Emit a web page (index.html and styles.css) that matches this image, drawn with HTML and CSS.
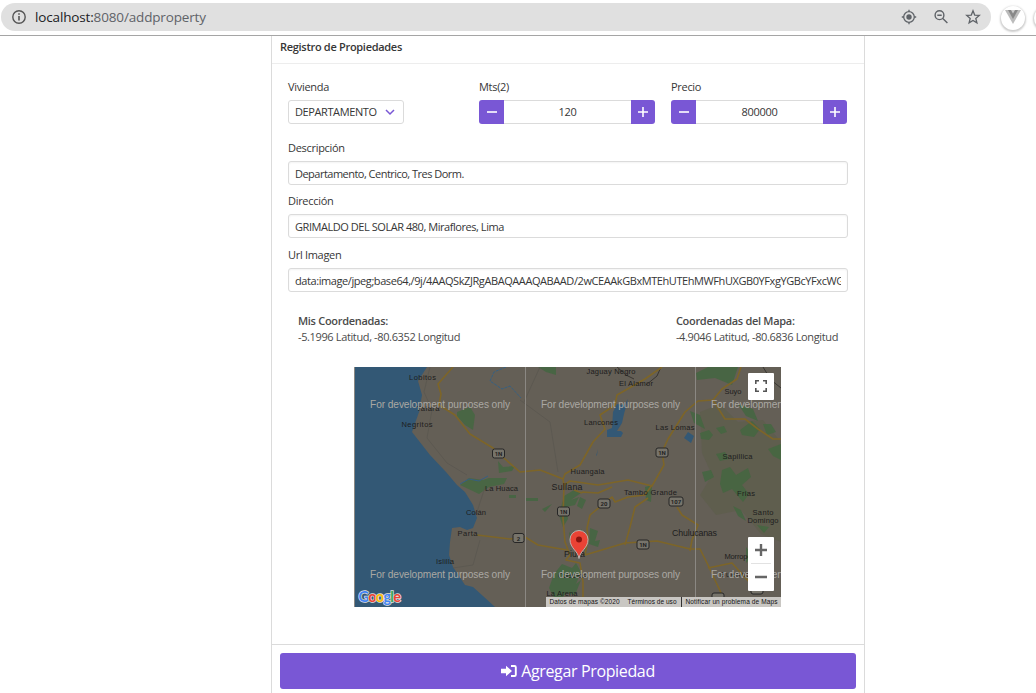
FILE: index.html
```
<!DOCTYPE html>
<html lang="es">
<head>
<meta charset="utf-8">
<title>Registro de Propiedades</title>
<link rel="stylesheet" href="styles.css">
</head>
<body>
<header class="browser">
  <div class="omnibox">
    <svg class="info" width="16" height="16" viewBox="0 0 16 16"><circle cx="8" cy="8" r="6.2" fill="none" stroke="#555" stroke-width="1.4"/><path d="M8 7v4.4M8 4.2v1.6" stroke="#555" stroke-width="1.6"/></svg>
    <span class="url"><b>localhost:</b>8080/addproperty</span>
    <div class="tools">
      <svg width="16" height="16" viewBox="0 0 16 16" fill="none" stroke="#5f6368" stroke-width="1.3"><circle cx="8" cy="8" r="5.3"/><circle cx="8" cy="8" r="2.7" fill="#5f6368" stroke="none"/><path d="M8 .8v2M8 13.2v2M.8 8h2M13.2 8h2"/></svg>
      <svg width="16" height="16" viewBox="0 0 16 16" fill="none" stroke="#5f6368" stroke-width="1.4"><circle cx="6.5" cy="6.2" r="4.4"/><path d="M9.8 9.5l4.6 4.6M4.3 6.2h4.4"/></svg>
      <svg width="16" height="16" viewBox="0 0 16 16" fill="none" stroke="#5f6368" stroke-width="1.3"><path d="M8 1.8l1.7 4.3 4.6.3-3.5 3 1.1 4.5L8 11.4l-3.9 2.5 1.1-4.5-3.5-3 4.6-.3z"/></svg>
    </div>
  </div>
  <div class="ext"><svg width="16" height="14" viewBox="0 0 16 14"><path d="M0 0h16L8 14z" fill="#bbb"/><path d="M3 0h10L8 9z" fill="#888"/><path d="M6 0h4L8 3.4z" fill="#ccc"/></svg></div>
  <div class="ext next"></div>
</header>
<main class="card">
  <h1 class="card-title"><span>Registro de Propiedades</span></h1>
  <div class="content">
    <div class="row">
      <div class="col"><label>Vivienda</label>
        <div class="select"><span>DEPARTAMENTO</span><svg width="10" height="7" viewBox="0 0 10 7"><path d="M1 1l4 4 4-4" fill="none" stroke="#7957d5" stroke-width="1.5"/></svg></div></div>
      <div class="col"><label class="mts">Mts(2)</label>
        <div class="number"><i class="btn"><svg width="12" height="12"><path d="M1 6h10" stroke="#fff" stroke-width="1.6"/></svg></i><span class="value">120</span><i class="btn plus"><svg width="12" height="12"><path d="M1 6h10M6 1v10" stroke="#fff" stroke-width="1.6"/></svg></i></div></div>
      <div class="col"><label>Precio</label>
        <div class="number"><i class="btn"><svg width="12" height="12"><path d="M1 6h10" stroke="#fff" stroke-width="1.6"/></svg></i><span class="value">800000</span><i class="btn plus"><svg width="12" height="12"><path d="M1 6h10M6 1v10" stroke="#fff" stroke-width="1.6"/></svg></i></div></div>
    </div>
    <div class="field desc"><label>Descripción</label><div class="input"><span class="text">Departamento, Centrico, Tres Dorm.</span></div></div>
    <div class="field"><label>Dirección</label><div class="input"><span class="addr">GRIMALDO DEL SOLAR 480, Miraflores, Lima</span></div></div>
    <div class="field"><label>Url Imagen</label><div class="input"><span class="long">data:image/jpeg;base64,/9j/4AAQSkZJRgABAQAAAQABAAD/2wCEAAkGBxMTEhUTEhMWFhUXGB0YFxgYGBcYFxcWGBcY</span></div></div>
    <div class="coords">
      <div><b>Mis Coordenadas:</b><span>-5.1996 Latitud, -80.6352 Longitud</span></div>
      <div><b>Coordenadas del Mapa:</b><span>-4.9046 Latitud, -80.6836 Longitud</span></div>
    </div>
    <div class="map">
      <svg class="tiles" width="427" height="240" viewBox="354 367 427 240">
        <rect x="354" y="367" width="427" height="240" fill="#645f56"/>
        <path class="hills" d="M700 412l20-8 18 18 25-2 18 22v100l-20-8-20-24-25 5-16-20 12-20-10-22z"/>
        <path class="water" d="M354 367h73l-9 14 4 14-3 17-7 20 18 23 16 17 11 13 8 7 8 13 4 13-4 10-6 2-7-3-8 1-2 14-1 13 4 12 12 18 8 2 10 9 12 11H354zM613 412l4-8 7 1 4-6-4 15-2 9-5 8h4l2 2-2 4h-14v-7l5-2zM688 432l6 4-3 7-7-5zM598 449l-2 7 1-1z"/>
        <g class="green">
          <path d="M457 412l13-5 5 8-2 15-8-5-8-9zM498 461l5 6 12-1-3 5-13 2zM460 485l9-7 14 2 6-2 18 0-3 6-15 3-10 7zM538 367h18v8l-10-3zM509 495h7v3h-7zM526 498h12v3h-12zM542 509l10-5-7 8zM696 373l12-6h30l-6 18-17-7-18 2zM690 411l10 4 5 14-11-6zM700 433l9-3 4 5-4 5-8-1zM716 428l8-2 3 6-6 2zM740 430l12-9 8 8-6 8-12-2zM763 424l8 0 5 8-9 3zM738 404l15 5 5 12-12-5zM768 449l13-5v16l-8-4zM702 472l9-2 3 7-9 5zM722 470l8-3 6 8 12-7 3 9-9 8 7 9-6 8-11-13-9 4-3-9zM716 454l9-2 4 7-9 2zM733 506l8 4 5 11-8-5zM757 525l12 2-5 6zM746 547l7 9-7 7z"/>
          <path d="M564 496l10-6 7 3-10 7 8-3-4 8-9 2 2 12-5 8-4-12zM590 528l8 3-3 10 5-1-2 7-9-3zM581 529l6 7-1 18-4-9zM569 532l4 4-3 5zM549 588l5-14 8-10 10 4 4-5 5 9-5 12 5-4-6 15-8-2-10 9-5-8zM645 487l7-2-1 17-5-2zM580 497l6 3-4 9-5-3z"/>
        </g>
        <path class="minor" d="M430 367l-6 25 8 18-5 28 20 25 20 12M520 400l30 22 8 50M480 540l-7 25-20 3M485 487l-8 25M540 367l-16 35"/>
        <path class="rail" d="M661 367l-4 9-11 9M616 366l10 9 8 4M781 388l-10-8-8-13"/>
        <path class="river" stroke-dasharray="3 1" d="M506 367l-12 5-4 9 12 8 8-3 11 12"/>
        <path class="river" d="M460 484l9-5 10 2 9-5"/>
        <g class="road">
          <path d="M453 367l-15 17 3 10-2 11 16 10 15 19 23 14 12 11 15 13 20-2 13 5 10 4 2-5 15-9 13-23 12-13-5-14 15-10 2-10 28-16 17-12M563 479l1 6 6-4 28 4 30-5 24 6 12-21-2-13 6-13 17-27 13-11 15-1 9-11 15-10 4-12M713 400l12 19h20l13 10 15 10h8"/>
          <path d="M564 485l-1 33 2 24 5 13-4 5 14 3 3 19v25M582 492l16 1 14-6M574 490l8 3M652 485l-7 10-17 2-13 5-3-5-22 18-3 13 1 10-3 17 40-12 32-2 33 8h10l8 16 14 30M625 545l5-18 5-20 13-9M690 551l2-11 6-15-16-10-5-8M708 568l24-5 20 22M477 535l33 4 15-2 13 8 29 5"/>
        </g>
        <path d="M354.500 367v240M525.500 367v240M695.500 367v240" stroke="#8b8883"/>
        <g class="shields">
          <rect x="492.500" y="449" width="12" height="9" rx="2"/><text x="498.500" y="456">1N</text>
          <rect x="656" y="448" width="12" height="9" rx="2"/><text x="662" y="455">1N</text>
          <rect x="557.500" y="507" width="12" height="9" rx="2"/><text x="563.500" y="514">1N</text>
          <rect x="598" y="499" width="12" height="9" rx="2"/><text x="604" y="506">20</text>
          <rect x="669" y="497" width="14" height="9" rx="2"/><text x="676" y="504">107</text>
          <rect x="513" y="533.500" width="11" height="9" rx="2"/><text x="518.500" y="540.500">2</text>
          <rect x="637" y="540" width="12" height="9" rx="2"/><text x="643" y="547">1N</text>
          <rect x="712" y="593" width="12" height="9" rx="2"/><rect x="751" y="585" width="12" height="9" rx="2"/>
        </g>
        <g class="places">
          <text x="422.500" y="380" textLength="27">Lobitos</text><text x="428" y="411" textLength="23">Talara</text><text x="417" y="427" textLength="31">Negritos</text>
          <text x="611" y="374" textLength="49">Jaguay Negro</text><text x="636" y="386" textLength="34">El Alamor</text><text x="601" y="425" textLength="34">Lancones</text><text x="675" y="430" textLength="39">Las Lomas</text>
          <text x="733" y="394" textLength="17">Suyo</text><text x="737.500" y="459" textLength="30">Sapillica</text><text x="587.500" y="474" textLength="34">Huangala</text><text class="city" x="567" y="490" textLength="31">Sullana</text>
          <text x="501.500" y="491" textLength="33">La Huaca</text><text x="650.500" y="495" textLength="53">Tambo Grande</text><text x="746" y="496" textLength="18">Frias</text><text x="763" y="515" textLength="21">Santo</text><text x="763" y="523" textLength="31">Domingo</text>
          <text x="476" y="515" textLength="20">Colán</text><text x="467.500" y="536" textLength="20">Parta</text><text class="city" x="574.500" y="557" textLength="21">Piura</text><text class="city" x="694.500" y="536" textLength="45">Chulucanas</text><text x="445" y="564" textLength="18">Islilla</text><text x="740" y="559" textLength="31">Morropón</text><text x="572" y="578" textLength="28">Catacaos</text><text x="562" y="596" textLength="31">La Arena</text><text x="735" y="577" textLength="30">Buenos</text>
        </g>
        <g class="notice"><text x="370" y="408" textLength="140">For development purposes only</text><text x="541" y="408" textLength="139">For development purposes only</text><text x="711" y="408" textLength="139">For development purposes only</text><text x="370" y="578" textLength="140">For development purposes only</text><text x="541" y="578" textLength="139">For development purposes only</text><text x="711" y="578" textLength="139">For development purposes only</text></g>
        <path d="M579 558.500c-1-8-9-10-9-19a9 9 0 0 1 18 0c0 9-8 11-9 19z" fill="#ea4335" stroke="#c8c8c8" stroke-width=".8"/><circle cx="579" cy="539.500" r="3" fill="#8a1510"/>
        <text class="google" x="358.500" y="602" textLength="42.500"><tspan fill="#4285f4">G</tspan><tspan fill="#ea4335">o</tspan><tspan fill="#fbbc05">o</tspan><tspan fill="#4285f4">g</tspan><tspan fill="#34a853">l</tspan><tspan fill="#ea4335">e</tspan></text>
        <rect x="546" y="597" width="235" height="10" fill="#c9c7c3"/>
        <path d="M681.500 597v10" stroke="#333"/>
        <g class="legal"><text x="549.500" y="604.300" textLength="70">Datos de mapas ©2020</text><text x="627.500" y="604.300" textLength="49">Términos de uso</text><text x="685.500" y="604.300" textLength="92">Notificar un problema de Maps</text></g>
      </svg>
      <div class="ctl full"><svg width="12" height="12" viewBox="0 0 12 12"><path d="M.8 4V.8H4M8 .8h3.200V4M11.200 8v3.200H8M4 11.200H.8V8" fill="none" stroke="#555" stroke-width="1.6"/></svg></div>
      <div class="ctl zoomer"><svg width="26" height="54" viewBox="0 0 26 54"><path d="M7 13h12M13 7v12M7 40h12" stroke="#666" stroke-width="2.400"/><path d="M3 26.500h20" stroke="#e2e2e2"/></svg></div>
    </div>
  </div>
  <footer class="foot"><div class="submit"><svg width="16" height="12" viewBox="0 0 16 12"><path d="M0 3.800h5V.7l6 5.300-6 5.300V8.200H0z" fill="#fff"/><path d="M10 1h3.500a1.300 1.300 0 0 1 1.300 1.300v7.400a1.300 1.300 0 0 1-1.300 1.300H10" fill="none" stroke="#fff" stroke-width="1.900"/></svg><span>Agregar Propiedad</span></div></footer>
</main>
</body>
</html>
```
FILE: styles.css
```
* { box-sizing: border-box; }
body { margin: 0; height: 693px; overflow: hidden; background: #fff; color: #363636; font: 11px/16px "Open Sans", "Noto Sans", sans-serif; letter-spacing: -.3px; }
svg { display: block; flex: none; }
.browser { height: 36px; border-bottom: 1px solid #a5a5a5; display: flex; align-items: flex-start; padding: 3px 0 0 1px; overflow: hidden; }
.omnibox { width: 990px; height: 28px; flex: none; border-radius: 14px; background: #e0e0e0; display: flex; align-items: center; padding: 0 10px; }
.url { margin-left: 8px; font-size: 13.500px; letter-spacing: -.15px; color: #5f6368; }
.url b { font-weight: 400; color: #202124; }
.tools { margin-left: auto; display: flex; gap: 16px; }
.ext { width: 24px; height: 24px; margin: 3px 0 0 10px; flex: none; border-radius: 50%; background: #fff; box-shadow: 0 1px 2px 1px #ccc; display: flex; justify-content: center; padding-top: 4px; }
.ext.next { margin-left: 9px; }
.card { width: 594px; height: 657px; margin-left: 271px; border: solid #dbdbdb; border-width: 0 1px; display: flex; flex-direction: column; }
.card-title { margin: 0; height: 28px; padding: 3px 8px; border-bottom: 1px solid #ededed; font-size: 11px; line-height: 16px; font-weight: 600; }
.content { flex: 1; padding: 15px 16px 0; }
.row { display: grid; grid-template-columns: 175px 176px 176px; gap: 16px; height: 61px; }
label { display: block; height: 21px; line-height: 16px; }
.select { width: 116px; height: 24px; border: 1px solid #dbdbdb; border-radius: 3px; display: flex; align-items: center; justify-content: space-between; padding: 0 8px 0 6px; letter-spacing: -.4px; }
.number { height: 24px; display: flex; }
.btn { width: 25px; background: #7957d5; border-radius: 3px 0 0 3px; display: flex; align-items: center; justify-content: center; }
.btn.plus { width: 24px; border-radius: 0 3px 3px 0; }
.value { flex: 1; border: 1px solid #dbdbdb; border-width: 1px 0; line-height: 22px; text-align: center; }
.field { height: 53.300px; }
.input { height: 24px; border: 1px solid #dbdbdb; border-radius: 3px; box-shadow: inset 0 1px 2px rgba(10,10,10,.05); padding: 0 6px; line-height: 23px; overflow: hidden; }
.input span { display: block; overflow: hidden; white-space: nowrap; }
.input .text { letter-spacing: -.52px; }
.input .addr { letter-spacing: -.45px; }
.input .long { letter-spacing: -.42px; }
.coords { display: flex; justify-content: space-between; padding: 13px 10px 0 10px; color: #4a4a4a; height: 55px; }
.coords b, .coords span { display: block; width: max-content; }
.coords b { font-weight: 600; }
.coords span { letter-spacing: -.37px; }
.map { position: relative; width: 427px; height: 240px; margin-left: 66px; margin-top: 12px; }
.ctl { position: absolute; right: 7px; width: 26px; background: #fff; border-radius: 1px; }
.full { top: 6px; height: 27px; display: flex; align-items: center; justify-content: center; }
.zoomer { bottom: 16px; height: 54px; }
.tiles text { letter-spacing: 0; }
.water { fill: #335875; }
.green { fill: #446741; opacity: .85; }
.hills { fill: #5c5e49; opacity: .6; }
.minor { fill: none; stroke: #59564f; stroke-width: .7; }
.rail { fill: none; stroke: #33312e; stroke-width: .9; }
.river { fill: none; stroke: #365f82; }
.road { fill: none; stroke: #7d6528; stroke-width: 1.600; stroke-linejoin: round; }
.places { font: 7.500px "Liberation Sans", sans-serif; fill: #1d1d1d; text-anchor: middle; }
.places .city { font-size: 8.800px; }
.shields rect { fill: #77746b; stroke: #262626; }
.shields text { font: bold 6px Roboto, sans-serif; text-anchor: middle; fill: #222; }
.notice { font: 10.200px "Liberation Sans", sans-serif; fill: #aaa8a3; }
.google { font: bold 14.500px Lato, sans-serif; stroke: #dedede; stroke-width: 1.500px; paint-order: stroke; }
.legal { font: 6.500px "Liberation Sans", sans-serif; fill: #111; }
.foot { height: 49px; border-top: 1px solid #dbdbdb; padding: 8px; }
.submit { height: 36px; border-radius: 3px; background: #7957d5; color: #fff; display: flex; align-items: center; justify-content: center; gap: 4px; font-size: 16px; letter-spacing: -.35px; padding-left: 20px; }
```
